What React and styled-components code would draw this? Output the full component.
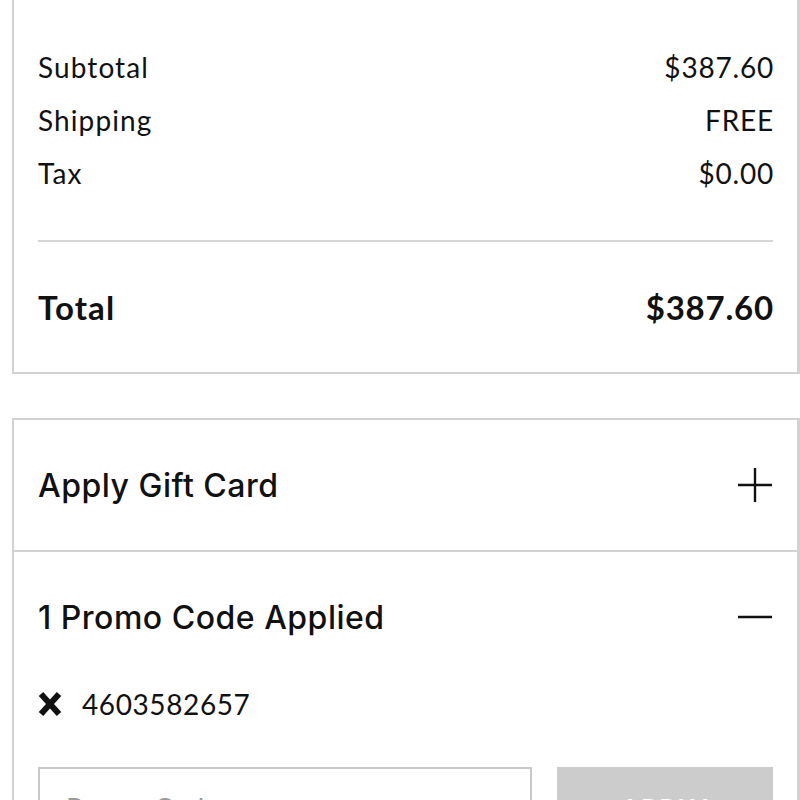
import React from "react";
import styled, { createGlobalStyle } from "styled-components";

const Global = createGlobalStyle`
  html, body { margin: 0; padding: 0; background: #fff; }
  body { overflow: hidden; color: #111; font-family: "Lato", "Noto Sans", sans-serif; }
  * { box-sizing: border-box; }
`;

const Page = styled.div`
  display: flex;
  flex-direction: column;
  gap: 44px;
  padding-left: 12px;
  margin-top: -60px;
`;

const Card = styled.section`
  border: 2px solid #d2d2d2;
  border-right-width: 3px;
  background: #fff;
`;

const SummaryBody = styled.div`
  padding: 0 24px 45px 24px;
`;

const Heading = styled.h2`
  margin: 0;
  font-family: "Lato", sans-serif;
  font-weight: 700;
  font-size: 32px;
  line-height: 40px;
  height: 40px;
  margin-top: 20px;
  margin-bottom: 39px;
`;

const Row = styled.div`
  display: flex;
  justify-content: space-between;
  align-items: baseline;
  font-size: ${(p) => (p.$total ? "33px" : "28px")};
  font-weight: ${(p) => (p.$total ? 700 : 400)};
  line-height: ${(p) => (p.$total ? "40px" : "53px")};
`;

const Label = styled.span`
  letter-spacing: 1.1px;
`;

const Value = styled.span`
  letter-spacing: 0.8px;
  margin-right: -1px;
`;

const Divider = styled.hr`
  border: 0;
  height: 2px;
  background: #d6d6d6;
  margin: 40px 0 45px 0;
`;

const AccordionItem = styled.div`
  & + & {
    border-top: 2px solid #d2d2d2;
  }
`;

const AccordionHeader = styled.div`
  height: 130px;
  display: flex;
  align-items: center;
  justify-content: space-between;
  padding: 0 25px 0 24px;
`;

const AccordionTitle = styled.span`
  font-family: "Inter", "Liberation Sans", sans-serif;
  font-size: 32px;
  font-weight: 500;
  letter-spacing: 0.5px;
  color: #111;
`;

const AccordionContent = styled.div`
  padding: 2px 24px 40px 24px;
`;

const AppliedCode = styled.div`
  display: flex;
  align-items: center;
  gap: 20px;
  height: 40px;
  font-size: 28px;
  letter-spacing: 0.6px;
`;

const PromoForm = styled.div`
  display: flex;
  gap: 25px;
  margin-top: 43px;
`;

const PromoInput = styled.input`
  flex: 1;
  height: 82px;
  border: 2px solid #c9c9c9;
  border-radius: 0;
  padding: 0 26px;
  font-family: "Lato", sans-serif;
  font-size: 28px;
  color: #111;
  outline: none;
  &::placeholder { color: #9a9a9a; }
`;

const ApplyButton = styled.button`
  width: 216px;
  height: 82px;
  border: 0;
  background: #cccccc;
  color: #fff;
  font-family: "Lato", sans-serif;
  font-weight: 700;
  font-size: 26px;
  letter-spacing: 2px;
`;

const PlusIcon = ({ minus }) => (
  <svg width="34" height="34" viewBox="0 0 34 34">
    <line x1="0" y1="17" x2="34" y2="17" stroke="#111" strokeWidth="2.4" />
    {!minus && <line x1="17" y1="0" x2="17" y2="34" stroke="#111" strokeWidth="2.4" />}
  </svg>
);

const XIcon = () => (
  <svg width="24" height="26" viewBox="0 0 24 26">
    <path d="M3 3 L21 23 M21 3 L3 23" stroke="#111" strokeWidth="6" strokeLinecap="butt" />
  </svg>
);

export default function App() {
  return (
    <>
      <Global />
      <Page>
        <Card>
          <SummaryBody>
            <Heading>Order Summary</Heading>
            <Row><Label>Subtotal</Label><Value>$387.60</Value></Row>
            <Row><Label>Shipping</Label><Value>FREE</Value></Row>
            <Row><Label>Tax</Label><Value>$0.00</Value></Row>
            <Divider />
            <Row $total><Label>Total</Label><Value>$387.60</Value></Row>
          </SummaryBody>
        </Card>
        <Card>
          <AccordionItem>
            <AccordionHeader>
              <AccordionTitle>Apply Gift Card</AccordionTitle>
              <PlusIcon />
            </AccordionHeader>
          </AccordionItem>
          <AccordionItem>
            <AccordionHeader>
              <AccordionTitle>1 Promo Code Applied</AccordionTitle>
              <PlusIcon minus />
            </AccordionHeader>
            <AccordionContent>
              <AppliedCode>
                <XIcon />
                <span>4603582657</span>
              </AppliedCode>
              <PromoForm>
                <PromoInput placeholder="Promo Code" />
                <ApplyButton>APPLY</ApplyButton>
              </PromoForm>
            </AccordionContent>
          </AccordionItem>
        </Card>
      </Page>
    </>
  );
}
